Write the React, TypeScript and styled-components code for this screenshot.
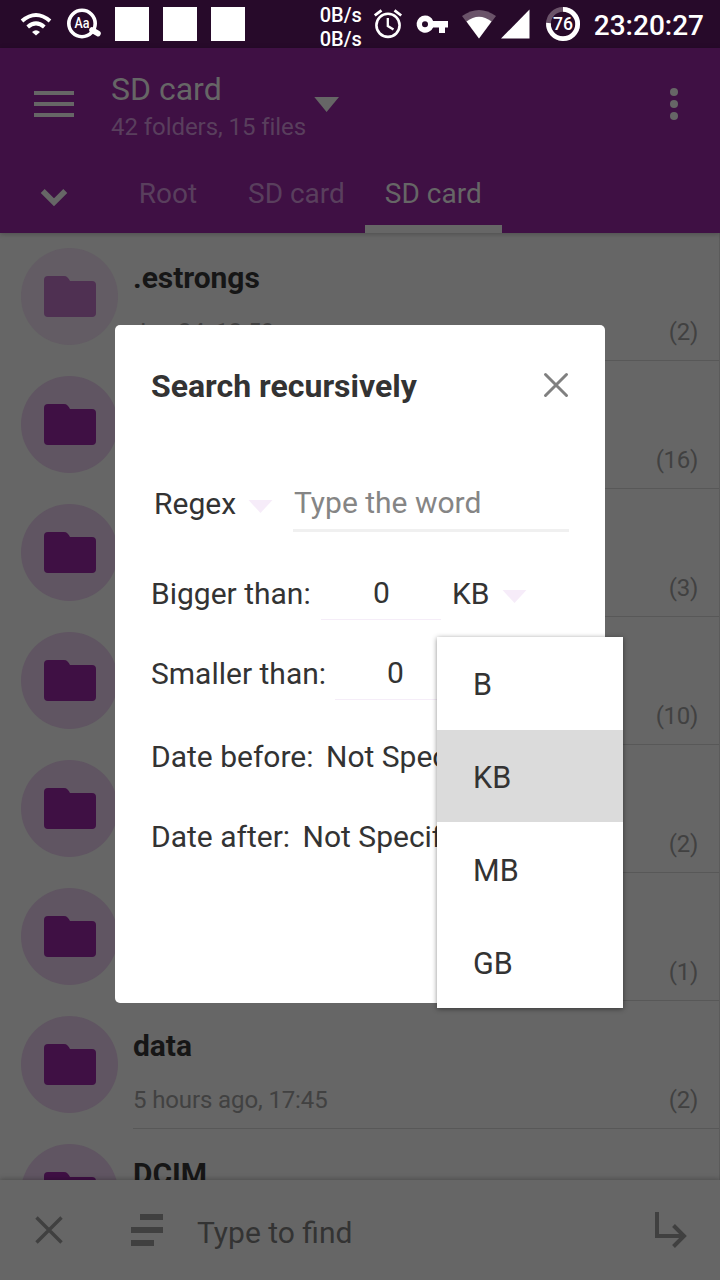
import React from "react";
import styled, { createGlobalStyle } from "styled-components";

const GlobalStyle = createGlobalStyle`
  * { box-sizing: border-box; }
  body { margin: 0; background: #666; font-family: Roboto, "Liberation Sans", sans-serif; }
  svg { display: block; flex: none; }
`;

const Screen = styled.div`
  position: relative;
  display: flex;
  flex-direction: column;
  width: 720px;
  height: 1280px;
  overflow: hidden;
  background: #666;
  white-space: nowrap;
`;

/* ---------- status bar ---------- */

const StatusBar = styled.div`
  display: flex;
  justify-content: space-between;
  height: 48px;
  flex: none;
  padding: 0 16px 0 20px;
  background: #270a2a;
  color: #fff;
`;

const StatusGroup = styled.div<{ $gap: number }>`
  display: flex;
  gap: ${(p) => p.$gap}px;
`;

const NoticeSquare = styled.div`
  width: 34px;
  height: 34px;
  margin-top: 7px;
  background: #fff;
`;

const NetSpeed = styled.div`
  width: 43px;
  padding-top: 3px;
  font-size: 20px;
  font-weight: 500;
  line-height: 24px;
`;

const Clock = styled.div`
  padding-top: 9px;
  font-size: 28px;
  font-weight: 500;
  line-height: 33px;
`;

/* ---------- app header ---------- */

const Header = styled.header`
  flex: none;
  height: 185px;
  background: #3f1044;
  color: #666;
  z-index: 1;
  box-shadow: 0 1px 5px rgba(0, 0, 0, 0.25);
`;

const TitleBar = styled.div`
  display: flex;
  height: 105px;
  padding: 22px 42px 0 34px;
`;

const Titles = styled.div`
  width: 195px;
  margin: 0 8px 0 37px;
`;

const Title = styled.div`
  font-size: 32px;
  line-height: 38px;
`;

const Subtitle = styled.div`
  margin-top: 5px;
  font-size: 24px;
  line-height: 28px;
  letter-spacing: -0.06px;
  color: #593f5d;
`;

const MenuIcon = styled.svg`
  margin-top: 21px;
`;

const TitleArrow = styled.svg`
  margin-top: 27px;
`;

const MoreIcon = styled.svg`
  margin: 17px 0 0 auto;
`;

const TabBar = styled.div`
  display: flex;
  height: 80px;
`;

const TabToggle = styled.div`
  width: 108px;
  padding: 35px 0 0 40px;
`;

const Tab = styled.div<{ $active?: boolean }>`
  min-width: 120px;
  padding: 24px 20px 0;
  font-size: 28px;
  line-height: 33px;
  text-align: center;
  color: ${(p) => (p.$active ? "#666" : "#593f5d")};
  border-bottom: 8px solid ${(p) => (p.$active ? "#666" : "transparent")};
`;

/* ---------- file list ---------- */

const FileList = styled.div`
  flex: 1;
  min-height: 0;
  overflow: hidden;
  border-right: 1px solid #5b5b5b;
`;

const Row = styled.div`
  display: flex;
  height: 128px;
  padding-left: 21px;
`;

const Avatar = styled.div<{ $faded?: boolean }>`
  display: flex;
  justify-content: center;
  width: 97px;
  height: 97px;
  margin: 15px 15px 0 0;
  padding: 28px 0 0 1px;
  flex: none;
  border-radius: 50%;
  background: ${(p) => (p.$faded ? "#635c64" : "#605562")};
`;

const RowBody = styled.div`
  display: flex;
  flex: 1;
  justify-content: space-between;
  padding: 27px 21px 0 0;
  border-bottom: 1px solid #585858;
`;

const FileName = styled.div`
  height: 58px;
  font-size: 30px;
  font-weight: 700;
  line-height: 35px;
  letter-spacing: -0.06px;
  color: #161616;
`;

const Meta = styled.div`
  font-size: 24px;
  line-height: 28px;
  letter-spacing: -0.12px;
  color: #414141;
`;

const Count = styled(Meta)`
  margin-top: 58px;
  letter-spacing: -0.3px;
`;

/* ---------- find bar ---------- */

const FindBar = styled.div`
  display: flex;
  flex: none;
  height: 100px;
  padding: 0 33px 0 35px;
  background: #666;
  z-index: 1;
  box-shadow: 0 -1px 5px rgba(0, 0, 0, 0.25);
`;

const FindClose = styled.svg`
  margin: 36px 68px 0 0;
`;

const FilterIcon = styled.svg`
  margin: 34px 34px 0 0;
`;

const FindText = styled.div`
  padding-top: 35px;
  font-size: 30px;
  line-height: 35px;
  color: #333;
`;

const EnterIcon = styled.svg`
  margin: 32px 0 0 auto;
`;

/* ---------- dialog ---------- */

const Dialog = styled.section`
  position: absolute;
  left: 115px;
  top: 325px;
  width: 490px;
  height: 678px;
  padding: 42px 36px 0;
  border-radius: 5px;
  background: #fff;
  color: #333;
  font-size: 30px;
  line-height: 35px;
  z-index: 2;
`;

const DialogHead = styled.div`
  display: flex;
  justify-content: space-between;
  height: 119px;
  font-size: 32px;
  font-weight: 700;
  line-height: 38px;
`;

const DialogClose = styled.svg`
  margin-top: 5px;
`;

const Line = styled.div<{ $height: number }>`
  display: flex;
  height: ${(p) => p.$height}px;
`;

const Mode = styled.div`
  width: 97px;
  padding-left: 3px;
`;

const DropArrow = styled.svg`
  margin-top: 14px;
`;

const WordInput = styled.div`
  width: 276px;
  height: 47px;
  margin: -1px 0 0 20px;
  padding-left: 1px;
  border-bottom: 3px solid #f0f0f0;
  color: #858585;
`;

const NumberInput = styled.div`
  width: 120px;
  height: 45px;
  margin: -1px 11px 0 9px;
  padding-left: 1px;
  border-bottom: 1px solid #f5edf8;
  text-align: center;
`;

const Label = styled.div<{ $width?: number }>`
  width: ${(p) => (p.$width ? p.$width + "px" : "auto")};
`;

const Value = styled.div`
  margin-left: 12.5px;
`;

/* ---------- unit menu ---------- */

const UnitMenu = styled.ul`
  position: absolute;
  left: 437px;
  top: 637px;
  width: 186px;
  height: 371px;
  margin: 0;
  padding: 0;
  display: flex;
  flex-direction: column;
  list-style: none;
  background: #fff;
  color: #333;
  z-index: 3;
  box-shadow: 0 1px 5px rgba(0, 0, 0, 0.45);
`;

const Unit = styled.li<{ $selected?: boolean }>`
  height: ${(p) => (p.$selected ? 92 : 93)}px;
  padding: 30px 0 0 36px;
  font-size: 30.5px;
  line-height: 35px;
  background: ${(p) => (p.$selected ? "#dbdbdb" : "#fff")};

  &:nth-child(n + 3) {
    padding-top: 31px;
  }
`;

const Folder = ({ faded }: { faded?: boolean }) => (
  <svg width="52" height="41" viewBox="0 0 52 41">
    <path
      d="M4 0H20C23 0 24.5 2 26 5H48Q52 5 52 9V37Q52 41 48 41H4Q0 41 0 37V4Q0 0 4 0Z"
      fill={faded ? "#4f3052" : "#3f1044"}
    />
  </svg>
);

const Arrow = () => (
  <DropArrow width="25" height="13" viewBox="0 0 25 13">
    <path d="M0.5 0H24.5L12.5 13Z" fill="#f6ecf9" />
  </DropArrow>
);

type FileRow = { name?: string; date?: string; count: string; faded?: boolean };

const rows: FileRow[] = [
  { name: ".estrongs", date: "Jan 24, 18:59", count: "(2)", faded: true },
  { count: "(16)" },
  { count: "(3)" },
  { count: "(10)" },
  { count: "(2)" },
  { count: "(1)" },
  { name: "data", date: "5 hours ago, 17:45", count: "(2)" },
  { name: "DCIM", count: "" },
];

const units = ["B", "KB", "MB", "GB"];

export default function App() {
  return (
    <>
      <GlobalStyle />
      <Screen>
        <StatusBar>
          <StatusGroup $gap={14}>
            <svg width="33" height="48" viewBox="20 0 33 48">
              <g fill="none" stroke="#fff" strokeWidth="4">
                <path d="M22 21Q36 9 50 21" />
                <path d="M27.7 27Q36 19.8 44.3 27" />
              </g>
              <path d="M32 32Q36 28.5 40 32L36 35.5Z" fill="#fff" />
            </svg>
            <svg width="34" height="48" viewBox="67 0 34 48">
              <circle cx="82" cy="23.5" r="13.2" fill="none" stroke="#fff" strokeWidth="3.6" />
              <path d="M92 30L98 33.5" stroke="#fff" strokeWidth="5.5" strokeLinecap="round" />
              <text
                x="74.5"
                y="28"
                fontSize="14"
                fontWeight="500"
                fill="#fff"
                textLength="15"
                lengthAdjust="spacingAndGlyphs"
              >
                Aa
              </text>
            </svg>
            <NoticeSquare />
            <NoticeSquare />
            <NoticeSquare />
          </StatusGroup>
          <StatusGroup $gap={11}>
            <NetSpeed>
              0B/s
              <br />
              0B/s
            </NetSpeed>
            <svg width="209" height="48" viewBox="374 0 209 48">
              <g fill="none" stroke="#fff">
                <circle cx="388" cy="25.3" r="11.6" strokeWidth="2.6" />
                <path d="M387.8 18V26L393.5 29.5" strokeWidth="2.3" />
                <path d="M374.8 15.5L381.5 10.3M401.2 15.5L394.5 10.3" strokeWidth="2.8" />
              </g>
              <path
                fillRule="evenodd"
                fill="#fff"
                d="M425 15.5A8.6 8.6 0 0 1 433.1 21H448V27.5H445V33H439V27.5H433.1A8.6 8.6 0 1 1 425 15.5ZM425 21.2A3 3 0 1 0 425 27.2A3 3 0 1 0 425 21.2Z"
              />
              <path d="M462 16Q479 4 496 16L479 38.5Z" fill="#6a5369" />
              <path d="M466.5 21.5Q479 12 491.5 21.5L479 38.5Z" fill="#fff" />
              <path d="M529.5 9.5V38.5H501Z" fill="#fff" />
              <circle cx="563" cy="24" r="14.6" fill="none" stroke="#6a5369" strokeWidth="4.8" />
              <path
                d="M563 9.4A14.6 14.6 0 1 1 548.5 23"
                fill="none"
                stroke="#fff"
                strokeWidth="4.8"
              />
              <text
                x="553"
                y="30"
                fontSize="17.5"
                fontWeight="500"
                fill="#fff"
                textLength="20"
                lengthAdjust="spacingAndGlyphs"
              >
                76
              </text>
            </svg>
            <Clock>23:20:27</Clock>
          </StatusGroup>
        </StatusBar>

        <Header>
          <TitleBar>
            <MenuIcon width="40" height="26" viewBox="0 0 40 26">
              <path d="M0 0H40V4H0ZM0 11H40V15H0ZM0 22H40V26H0Z" fill="#666" />
            </MenuIcon>
            <Titles>
              <Title>SD card</Title>
              <Subtitle>42 folders, 15 files</Subtitle>
            </Titles>
            <TitleArrow width="25" height="15" viewBox="0 0 25 15">
              <path d="M0.3 0H25L12.6 15Z" fill="#666" />
            </TitleArrow>
            <MoreIcon width="8" height="34" viewBox="0 0 8 34">
              <g fill="#666">
                <circle cx="4" cy="5" r="4" />
                <circle cx="4" cy="17" r="4" />
                <circle cx="4" cy="29" r="4" />
              </g>
            </MoreIcon>
          </TitleBar>
          <TabBar>
            <TabToggle>
              <svg width="28" height="20" viewBox="0 0 28 20">
                <path d="M2.7 3L14 14.3L25.3 3" fill="none" stroke="#666" strokeWidth="5.6" />
              </svg>
            </TabToggle>
            <Tab>Root</Tab>
            <Tab>SD card</Tab>
            <Tab $active>SD card</Tab>
          </TabBar>
        </Header>

        <FileList>
          {rows.map((row, i) => (
            <Row key={i}>
              <Avatar $faded={row.faded}>
                <Folder faded={row.faded} />
              </Avatar>
              <RowBody>
                <div>
                  <FileName>{row.name}</FileName>
                  <Meta>{row.date}</Meta>
                </div>
                <Count>{row.count}</Count>
              </RowBody>
            </Row>
          ))}
        </FileList>

        <FindBar>
          <FindClose width="28" height="28" viewBox="0 0 28 28">
            <path d="M1.5 1.5L26.5 26.5M26.5 1.5L1.5 26.5" stroke="#404040" strokeWidth="3.4" />
          </FindClose>
          <FilterIcon width="32" height="32" viewBox="0 0 32 32">
            <path d="M9 0H32V6H9ZM0 13H32V19H0ZM0 26H23V32H0Z" fill="#404040" />
          </FilterIcon>
          <FindText>Type to find</FindText>
          <EnterIcon width="32" height="37" viewBox="0 0 32 37">
            <path
              d="M2 0V24H29M18.5 13.5L29 24L18.5 34.5"
              fill="none"
              stroke="#404040"
              strokeWidth="4"
            />
          </EnterIcon>
        </FindBar>

        <Dialog>
          <DialogHead>
            Search recursively
            <DialogClose width="26" height="26" viewBox="0 0 26 26">
              <path
                d="M2.5 2.5L23.5 23.5M23.5 2.5L2.5 23.5"
                stroke="#808080"
                strokeWidth="3"
                strokeLinecap="round"
              />
            </DialogClose>
          </DialogHead>
          <Line $height={90}>
            <Mode>Regex</Mode>
            <Arrow />
            <WordInput>Type the word</WordInput>
          </Line>
          <Line $height={80}>
            <Label $width={161}>Bigger than:</Label>
            <NumberInput>0</NumberInput>
            <Label $width={50}>KB</Label>
            <Arrow />
          </Line>
          <Line $height={83}>
            <Label $width={175}>Smaller than:</Label>
            <NumberInput>0</NumberInput>
          </Line>
          <Line $height={80}>
            <Label>Date before:</Label>
            <Value>Not Specified</Value>
          </Line>
          <Line $height={80}>
            <Label>Date after:</Label>
            <Value>Not Specified</Value>
          </Line>
        </Dialog>

        <UnitMenu>
          {units.map((u) => (
            <Unit key={u} $selected={u === "KB"}>
              {u}
            </Unit>
          ))}
        </UnitMenu>
      </Screen>
    </>
  );
}
